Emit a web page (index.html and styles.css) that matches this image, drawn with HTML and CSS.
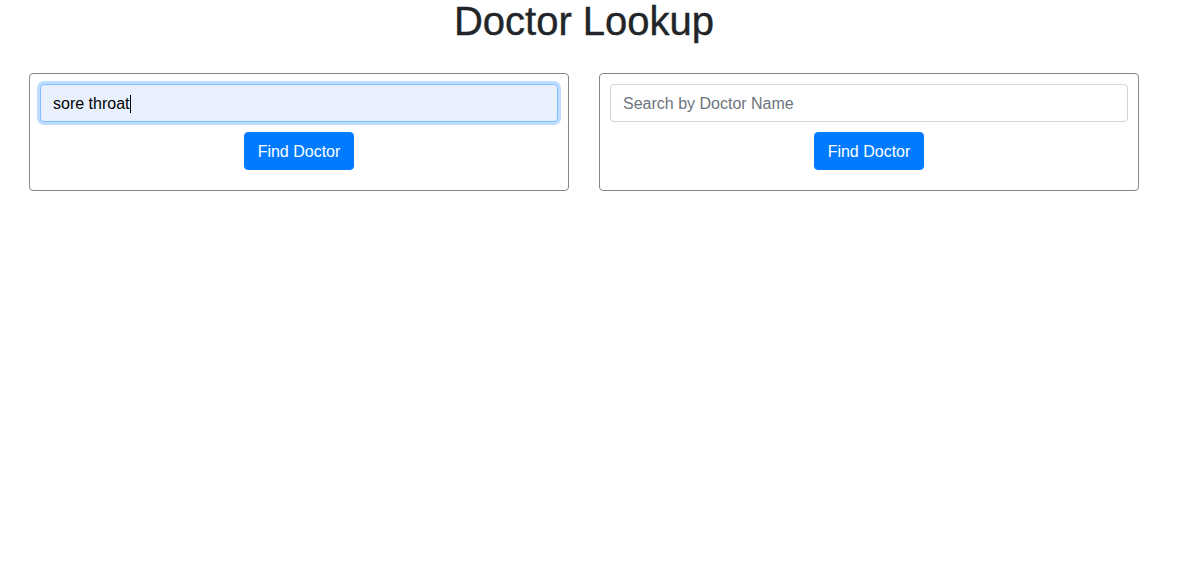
FILE: index.html
```html
<!DOCTYPE html>
<html lang="en">
<head>
<meta charset="utf-8">
<title>Doctor Lookup</title>
<link rel="stylesheet" href="styles.css">
</head>
<body>
<div class="container">
  <h1 class="title">Doctor Lookup</h1>
  <div class="row">
    <div class="col">
      <form class="search-box">
        <div class="field">
          <input class="form-control focused" type="text" value="sore throat">
          <span class="caret"></span>
        </div>
        <button class="btn" type="button">Find Doctor</button>
      </form>
    </div>
    <div class="col">
      <form class="search-box">
        <div class="field">
          <input class="form-control" type="text" placeholder="Search by Doctor Name">
        </div>
        <button class="btn" type="button">Find Doctor</button>
      </form>
    </div>
  </div>
</div>
</body>
</html>
```

FILE: styles.css
```css
* { box-sizing: border-box; }
html, body { margin: 0; padding: 0; background: #fff; }
body {
  font-family: "Liberation Sans", Arial, sans-serif;
  font-size: 16px;
  line-height: 1.5;
  color: #212529;
}
.container {
  width: 1140px;
  margin-left: 14px;
  padding: 0 15px;
}
.title {
  margin: 0 0 31px;
  font-size: 40px;
  font-weight: 500;
  line-height: 42px;
  text-align: center;
  color: #212529;
  -webkit-text-stroke: 0.4px #212529;
}
.row {
  display: flex;
  margin: 0 -15px;
}
.col {
  flex: 0 0 50%;
  padding: 0 15px;
}
.search-box {
  border: 1px solid #868686;
  border-radius: 4px;
  padding: 10px 10px 20px;
  display: flex;
  flex-direction: column;
  align-items: center;
  gap: 10px;
}
.field {
  position: relative;
  width: 100%;
}
.caret {
  position: absolute;
  left: 90px;
  top: 11px;
  width: 1px;
  height: 18px;
  background: #000;
}
.form-control {
  display: block;
  width: 100%;
  height: 38px;
  padding: 7px 12px 5px;
  font-family: inherit;
  font-size: 16px;
  line-height: 1.5;
  color: #495057;
  background: #fff;
  border: 1px solid #ced4da;
  border-radius: 4px;
  outline: none;
}
.form-control::placeholder { color: #6c757d; }
.form-control.focused {
  background: #e8f0fe;
  color: #000;
  border-color: #80bdff;
  box-shadow: 0 0 0 3px rgba(0, 123, 255, 0.25);
}
.btn {
  height: 38px;
  padding: 7px 13px 5px;
  font-family: inherit;
  font-size: 16px;
  line-height: 1.5;
  color: #fff;
  background: #007bff;
  border: 1px solid #007bff;
  border-radius: 4px;
  cursor: pointer;
}
```
